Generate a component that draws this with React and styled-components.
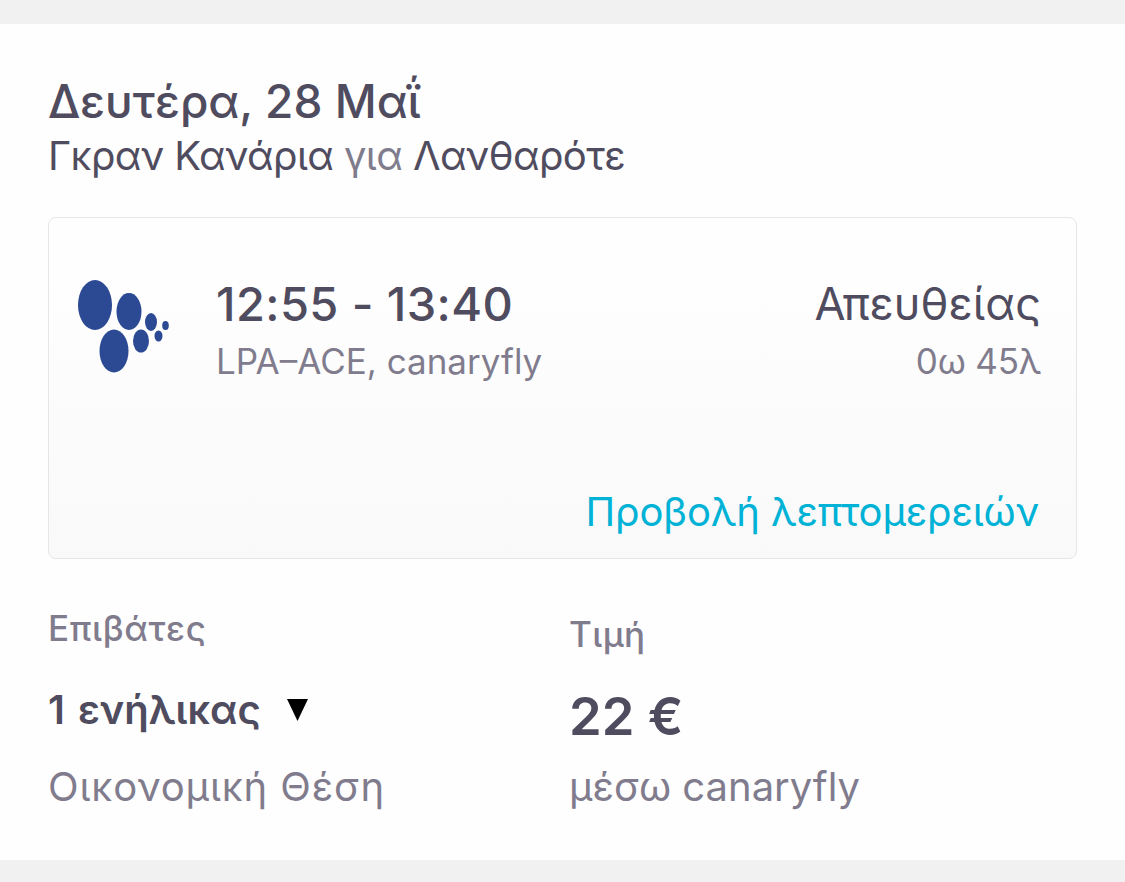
import React from 'react';
import styled, { createGlobalStyle } from 'styled-components';

const GlobalStyle = createGlobalStyle`
  * { box-sizing: border-box; }
  body {
    margin: 0;
    background-color: #f1f1f1;
    font-family: Inter, sans-serif;
    color: #504c60;
  }
`;

const dots = [
  { cx: 17, cy: 25, rx: 17, ry: 25 },
  { cx: 51, cy: 31.5, rx: 12.5, ry: 18.5 },
  { cx: 36, cy: 71, rx: 14.5, ry: 21.5 },
  { cx: 63, cy: 61, rx: 8, ry: 11.5 },
  { cx: 73, cy: 42, rx: 6, ry: 9 },
  { cx: 80.5, cy: 56, rx: 4, ry: 5.5 },
  { cx: 87.5, cy: 45.5, rx: 3.3, ry: 4.5 },
];

export default function App() {
  return (
    <>
      <GlobalStyle />
      <Page>
        <Panel>
          <Line $size={46} $height={60} $weight={500}>Δευτέρα, 28 Μαΐ</Line>
          <Line $size={40} $height={50} $spacing={-0.6}>Γκραν Κανάρια <Muted>για</Muted> Λανθαρότε</Line>
          <FlightCard>
            <FlightRow>
              <Logo viewBox="0 0 92 94" aria-label="canaryfly">
                {dots.map((dot, index) => <ellipse key={index} {...dot} />)}
              </Logo>
              <Times>
                <Line $size={47} $height={58} $weight={500} $spacing={0.4}>12:55 - 13:40</Line>
                <Line $size={35} $height={56} $muted>LPA–ACE, canaryfly</Line>
              </Times>
              <Duration>
                <Line $size={45} $height={58} $spacing={0.1}>Απευθείας</Line>
                <Line $size={35} $height={56} $spacing={-0.2} $muted>0ω 45λ</Line>
              </Duration>
            </FlightRow>
            <DetailsLink>Προβολή λεπτομερειών</DetailsLink>
          </FlightCard>
          <Summary>
            <Column>
              <Line $size={35} $height={50} $weight={500} $spacing={0.65} $muted>Επιβάτες</Line>
              <Passengers>
                <Line $size={40} $height={60} $weight={600} $gap={3}>1 ενήλικας</Line>
                <Arrow viewBox="0 0 21 22"><path d="M0 0h21L10.5 22z" /></Arrow>
              </Passengers>
              <Line $size={40} $height={60} $spacing={0.85} $muted>Οικονομική Θέση</Line>
            </Column>
            <Column>
              <Line $size={35} $height={62} $weight={500} $spacing={0.4} $muted>Τιμή</Line>
              <Price>22 €</Price>
              <Line $size={40} $height={60} $muted>μέσω canaryfly</Line>
            </Column>
          </Summary>
        </Panel>
      </Page>
    </>
  );
}

const Page = styled.div`
  height: 882px;
  padding: 24px 0 22px;
  overflow: hidden;
`;

const Panel = styled.main`
  height: 836px;
  padding: 47px 48px 0;
  background-color: #fefefe;
`;

const Line = styled.div`
  font-size: ${(p) => p.$size}px;
  line-height: ${(p) => p.$height}px;
  font-weight: ${(p) => p.$weight || 400};
  letter-spacing: ${(p) => p.$spacing || 0}px;
  word-spacing: ${(p) => p.$gap || 0}px;
  color: ${(p) => (p.$muted ? '#807c8d' : '#504c60')};
  white-space: nowrap;
`;

const Muted = styled.span`
  color: #807c8d;
`;

const FlightCard = styled.section`
  height: 342px;
  margin-top: 36px;
  padding: 57px 35px 0 29px;
  border: 1px solid #e6e5e9;
  border-radius: 8px;
  background: linear-gradient(#fefefe 20%, #f9f9f9);
`;

const FlightRow = styled.div`
  display: flex;
  height: 206px;
`;

const Logo = styled.svg`
  width: 92px;
  height: 94px;
  margin-top: 5px;
  fill: #2c4994;
`;

const Times = styled.div`
  margin-left: 46px;
`;

const Duration = styled.div`
  margin-left: auto;
  text-align: right;
`;

const DetailsLink = styled.div`
  margin-right: 2px;
  color: #00b2d6;
  font-size: 40px;
  letter-spacing: -0.15px;
  line-height: 62px;
  text-align: right;
`;

const Summary = styled.section`
  display: grid;
  grid-template-columns: 521px 1fr;
  margin-top: 44px;
`;

const Column = styled.div`
  min-width: 0;
`;

const Passengers = styled.div`
  display: flex;
  align-items: center;
  height: 97px;
  margin-top: 7px;
  padding-top: 2px;
`;

const Arrow = styled.svg`
  width: 21px;
  height: 22px;
  margin-left: 26px;
`;

const Price = styled.div`
  height: 92px;
  font-size: 52.5px;
  line-height: 103px;
  font-weight: 600;
`;
